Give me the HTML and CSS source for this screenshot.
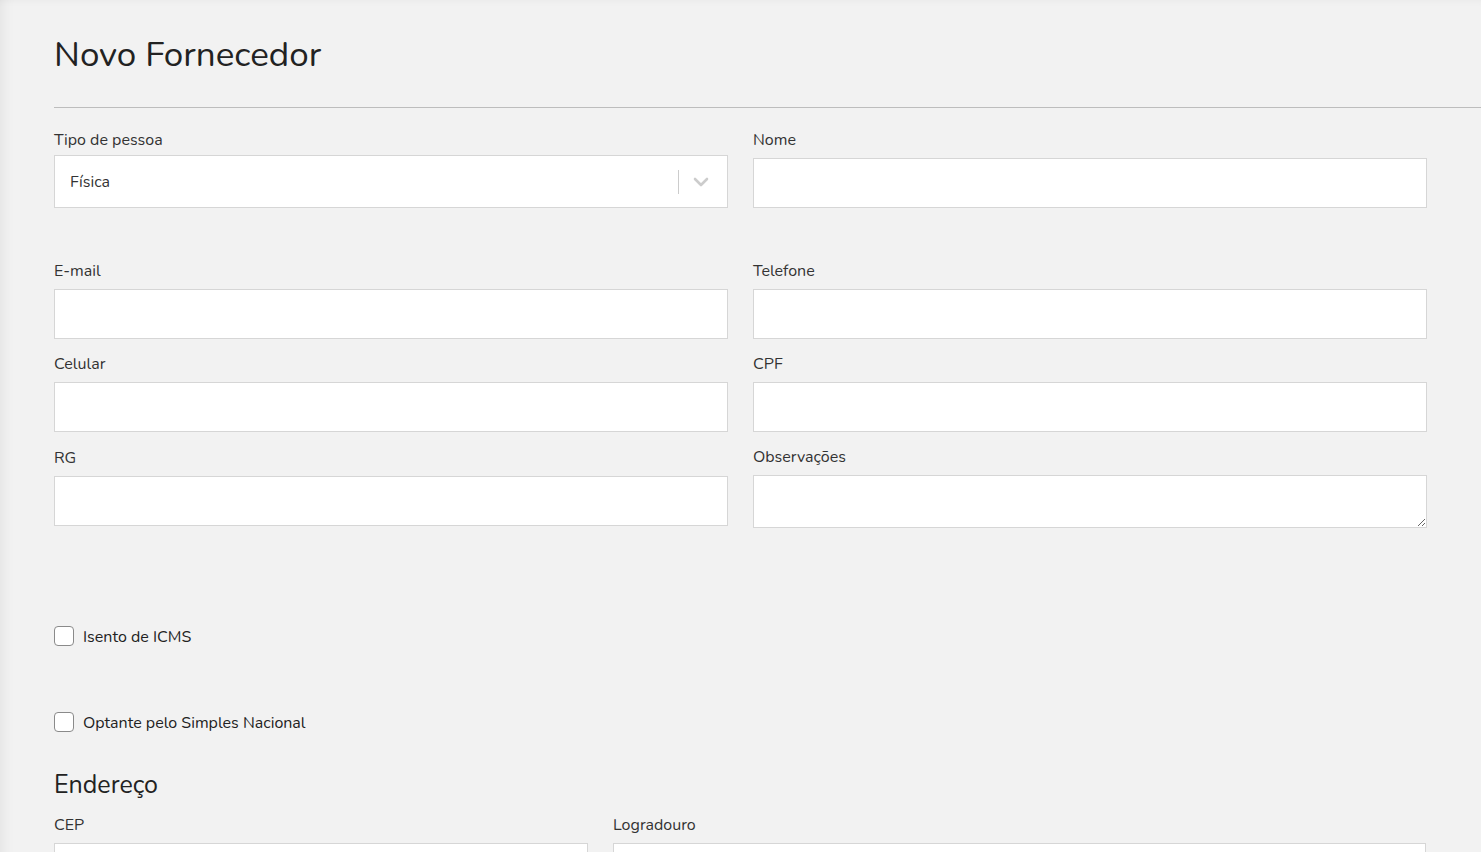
FILE: index.html
```html
<!DOCTYPE html>
<html lang="pt-BR">
<head>
<meta charset="utf-8">
<title>Novo Fornecedor</title>
<link rel="stylesheet" href="styles.css">
</head>
<body>
<div class="page">
  <header class="page-head">
    <h1 class="title">Novo Fornecedor</h1>
  </header>
  <hr class="divider">
  <form class="form">
    <div class="row row-first">
      <div class="field">
        <label class="label">Tipo de pessoa</label>
        <div class="select">
          <span class="select-value">Física</span>
          <span class="select-sep"></span>
          <svg class="chevron" width="16" height="10" viewBox="0 0 16 10"><path d="M2 2 L8 8 L14 2" fill="none" stroke="#cccccc" stroke-width="2.6" stroke-linecap="round" stroke-linejoin="round"/></svg>
        </div>
      </div>
      <div class="field">
        <label class="label">Nome</label>
        <input class="input input-nome" type="text">
      </div>
    </div>
    <div class="row row-second">
      <div class="field">
        <label class="label">E-mail</label>
        <input class="input" type="text">
      </div>
      <div class="field">
        <label class="label">Telefone</label>
        <input class="input" type="text">
      </div>
    </div>
    <div class="row row-tight">
      <div class="field">
        <label class="label">Celular</label>
        <input class="input" type="text">
      </div>
      <div class="field">
        <label class="label">CPF</label>
        <input class="input" type="text">
      </div>
    </div>
    <div class="row row-tight">
      <div class="field">
        <label class="label">RG</label>
        <input class="input" type="text">
      </div>
      <div class="field">
        <label class="label">Observações</label>
        <textarea class="input textarea"></textarea>
      </div>
    </div>
    <div class="check check-first">
      <span class="box"></span>
      <span class="check-label">Isento de ICMS</span>
    </div>
    <div class="check check-second">
      <span class="box"></span>
      <span class="check-label">Optante pelo Simples Nacional</span>
    </div>
    <h2 class="section">Endereço</h2>
    <div class="row row-address">
      <div class="field">
        <label class="label">CEP</label>
        <input class="input" type="text">
      </div>
      <div class="field">
        <label class="label">Logradouro</label>
        <input class="input" type="text">
      </div>
    </div>
  </form>
</div>
</body>
</html>
```
FILE: styles.css
```css
html, body {
  margin: 0;
  padding: 0;
  height: 100%;
  overflow: hidden;
}
body {
  background: #f2f2f2;
  font-family: "Nunito", "Lato", "Noto Sans", sans-serif;
  color: #333333;
}
.page {
  min-height: 100%;
  box-sizing: border-box;
  padding: 0 0 0 54px;
  box-shadow: inset 14px 0 14px -12px rgba(0,0,0,0.07), inset 0 8px 8px -8px rgba(0,0,0,0.05);
}
.page-head {
  padding-top: 34px;
  height: 107px;
  box-sizing: border-box;
}
.title {
  margin: 0;
  font-size: 35px;
  line-height: 42px;
  font-weight: 400;
  color: #222222;
}
.divider {
  margin: 0;
  border: 0;
  border-top: 1px solid #bdbdbd;
  height: 0;
}
.form {
  width: 1373px;
  padding-top: 21px;
}
.row {
  display: grid;
  grid-template-columns: 674px 674px;
  column-gap: 25px;
  align-items: end;
}
.row-second { margin-top: 52px; }
.row-tight { margin-top: 14px; }
.row-address {
  grid-template-columns: 534px 813px;
  column-gap: 25px;
  margin-top: 14px;
}
.field {
  display: flex;
  flex-direction: column;
}
.label {
  font-size: 16px;
  line-height: 20px;
  color: #333333;
  padding-top: 1px;
  margin-bottom: 8px;
}
.input {
  box-sizing: border-box;
  height: 50px;
  border: 1px solid #d6d6d6;
  background: #ffffff;
  margin: 0;
  padding: 0 15px;
  font: inherit;
  outline: none;
  display: block;
  width: 100%;
}
.textarea {
  height: 53px;
  resize: vertical;
  margin-bottom: -2px;
}
.select {
  box-sizing: border-box;
  height: 53px;
  margin-top: -3px;
  border: 1px solid #d6d6d6;
  background: #ffffff;
  display: flex;
  align-items: center;
  padding-left: 15px;
}
.select-value {
  flex: 1;
  font-size: 16px;
  color: #333333;
}
.select-sep {
  width: 1px;
  height: 24px;
  background: #cccccc;
}
.chevron {
  margin: 0 18px 0 14px;
}
.check {
  display: flex;
  align-items: center;
  gap: 9px;
}
.check-first { margin-top: 98px; }
.check-second { margin-top: 63px; }
.box {
  box-sizing: border-box;
  width: 20px;
  height: 20px;
  border: 1px solid #8a8a8a;
  border-radius: 4px;
  background: #ffffff;
}
.check-label {
  font-size: 16px;
  line-height: 20px;
  color: #222222;
  padding-top: 3px;
}
.section {
  margin: 37px 0 0 0;
  font-size: 25px;
  line-height: 30px;
  font-weight: 400;
  color: #222222;
}
```
